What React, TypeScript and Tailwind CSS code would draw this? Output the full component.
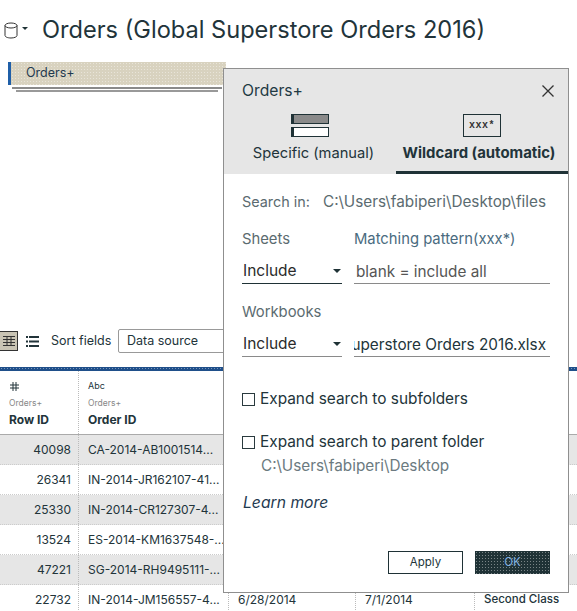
const font = "font-['Inter','Liberation_Sans',sans-serif]";

const rows = [
  { id: "40098", order: "CA-2014-AB1001514...", grey: true },
  { id: "26341", order: "IN-2014-JR162107-41...", grey: false },
  { id: "25330", order: "IN-2014-CR127307-4...", grey: true },
  { id: "13524", order: "ES-2014-KM1637548-...", grey: false },
  { id: "47221", order: "SG-2014-RH9495111-...", grey: true },
  { id: "22732", order: "IN-2014-JM156557-4...", grey: false, order_date: "6/28/2014", ship_date: "7/1/2014", mode: "Second Class" },
];

const dotted = {
  backgroundImage: "radial-gradient(#ffffff66 0.6px, transparent 0.7px)",
  backgroundSize: "3px 3px",
};

function Caret({ small }: { small?: boolean }) {
  return (
    <svg width={small ? 6 : 8} height={small ? 3 : 4} viewBox="0 0 8 4" className="text-[#1f3236]">
      <path d="M0 0h8L4 4z" fill="currentColor" />
    </svg>
  );
}

function Check({ label }: { label: string }) {
  return (
    <div className="flex items-center gap-[5px]">
      <div className="w-[13px] h-[13px] border border-[#2a3a3e] bg-white" />
      <span className="text-[15.4px] leading-5 text-[#22343a]">{label}</span>
    </div>
  );
}

function SelectLine({ dark }: { dark?: boolean }) {
  return (
    <div className={`w-[100px] h-[26px] pt-[1px] flex items-center justify-between pr-[1px] border-b ${dark ? "border-[#1f3236]" : "border-[#8a8a8a]"}`}>
      <span className="pl-[1px] text-[15.5px] text-[#2b2b2b]">Include</span>
      <Caret />
    </div>
  );
}

function Dialog() {
  return (
    <div className="absolute left-[223px] top-[68px] w-[346px] h-[525px] bg-white border border-[#8f8f8f] flex flex-col">
      <div className="bg-[#e6e6e6] h-[105px] flex flex-col shrink-0">
        <div className="flex items-center justify-between pl-[18px] pr-[14px] pt-[12px]">
          <span className="text-[15.7px] leading-5 text-[#1f3a44]">Orders+</span>
          <svg width="12" height="12" viewBox="0 0 12 12" stroke="#333" strokeWidth="1.300">
            <path d="M.5.500l11 11M11.500.500l-11 11" />
          </svg>
        </div>
        <div className="flex mt-[13px] flex-1">
          <div className="w-[172px] flex flex-col items-center">
            <div className="flex flex-col gap-[3px]">
              <div className="w-[38px] h-[10px] bg-[#8a8a8a] border-l-[3px] border-[#1f3236] border-y border-r" />
              <div className="w-[38px] h-[10px] bg-white border-l-[3px] border-[#1f3236] border-y border-r" />
            </div>
            <span className="mt-[6px] ml-[7px] text-[14.7px] leading-5 text-[#22343a] whitespace-nowrap">Specific (manual)</span>
          </div>
          <div className="flex-1 flex flex-col items-center border-b-[3px] border-[#1f3236]">
            <div className="w-[38px] h-[23px] border border-[#1f3236] bg-[#e6e6e6] flex items-center justify-center">
              <span className="font-['Liberation_Mono',monospace] text-[10px] font-bold tracking-[0.5px] text-[#333]">xxx*</span>
            </div>
            <span className="mt-[6px] mr-[6px] text-[14.9px] leading-5 font-bold text-[#22343a] whitespace-nowrap">Wildcard (automatic)</span>
          </div>
        </div>
      </div>
      <div className="flex-1 pl-[18px] pr-[18px] flex flex-col">
        <div className="mt-[18px] flex text-[14.4px] leading-5 text-[#5b6b70] whitespace-nowrap">
          <span className="w-[81px]">Search in:</span>
          <span className="text-[15.3px]">C:\Users\fabiperi\Desktop\files</span>
        </div>
        <div className="mt-[17px] flex gap-[12px] text-[14.8px] leading-5 text-[#5b6b70]">
          <div className="w-[100px]">
            <div>Sheets</div>
            <div className="mt-[9px]"><SelectLine dark /></div>
          </div>
          <div className="w-[196px]">
            <div className="text-[#4a6b80] whitespace-nowrap">Matching pattern(xxx*)</div>
            <div className="mt-[9px] h-[26px] pt-[2px] flex items-center pl-[2px] border-b border-[#8a8a8a] text-[15.3px] text-[#555]">blank = include all</div>
          </div>
        </div>
        <div className="mt-[18px] flex gap-[12px] text-[14.8px] leading-5 text-[#5b6b70]">
          <div className="w-[100px]">
            <div>Workbooks</div>
            <div className="mt-[9px]"><SelectLine /></div>
          </div>
          <div className="w-[196px] pt-[29px]">
            <div className="h-[26px] pt-[2px] flex items-center justify-end overflow-hidden border-b border-[#8a8a8a] pr-[4px] text-[15.3px] text-[#22343a] whitespace-nowrap">
              Superstore Orders 2016.xlsx
            </div>
          </div>
        </div>
        <div className="mt-[32px]"><Check label="Expand search to subfolders" /></div>
        <div className="mt-[23px]"><Check label="Expand search to parent folder" /></div>
        <div className="mt-[4px] ml-[19px] text-[15.3px] leading-5 text-[#6b7a80]">C:\Users\fabiperi\Desktop</div>
        <div className="mt-[17px] ml-[1px] text-[15.7px] leading-5 italic text-[#1f3a50]">Learn more</div>
        <div className="mt-[38px] flex justify-end gap-[12px]">
          <div className="w-[75px] h-[23px] border border-[#1f3236] flex items-center justify-center text-[11.5px] text-[#22343a]">Apply</div>
          <div className="w-[75px] h-[23px] bg-[#1f3236] flex items-center justify-center text-[11.5px] text-[#7fb0e0]" style={dotted}>OK</div>
        </div>
      </div>
    </div>
  );
}

export default function App() {
  return (
    <div className={`relative w-[577px] h-[611px] overflow-hidden bg-white ${font}`}>
      {/* title */}
      <div className="h-[62px] flex items-center pl-[4px] pb-[2px]">
        <svg width="14" height="17" viewBox="0 0 14 17" fill="none" stroke="#333" strokeWidth="1">
          <ellipse cx="7" cy="3.500" rx="6" ry="2.500" />
          <path d="M1 3.500v10c0 1.400 2.700 2.500 6 2.500s6-1.100 6-2.500v-10" />
        </svg>
        <span className="ml-[4px] mb-[3px]"><Caret small /></span>
        <span className="ml-[14px] text-[23.6px] leading-8 text-[#22343a] whitespace-nowrap">Orders (Global Superstore Orders 2016)</span>
      </div>
      {/* connection tile */}
      <div className="ml-[8px] w-[218px] h-[23px] bg-[#d8d2bf] border-l-[3px] border-[#1f5fa8] pl-[15px] flex items-center text-[12.5px] text-[#1f3a50]" style={dotted}>
        Orders+
      </div>
      <div className="ml-[12px] mt-[2px] w-[210px] h-[2px] bg-[#8a8a8a]" />
      <div className="ml-[16px] mt-[1px] w-[202px] h-[2px] bg-[#999]" />
      {/* toolbar */}
      <div className="mt-[230px] h-[38px] flex items-center">
        <div className="w-[19px] h-[20px] -ml-[1px] bg-[#c9c4b4] border border-[#333] flex items-center justify-center">
          <svg width="12" height="10" viewBox="0 0 12 10" fill="none" stroke="#333"><path d="M0 .5h12M0 3.500h12M0 6.500h12M0 9.500h12M4 0v10M8 0v10" /></svg>
        </div>
        <svg width="13" height="11" viewBox="0 0 13 11" fill="#22343a" className="ml-[8px]">
          <path d="M0 0h2v2H0zM3 0h10v2H3zM0 4.500h2v2H0zM3 4.500h10v2H3zM0 9h2v2H0zM3 9h10v2H3z" />
        </svg>
        <span className="ml-[12px] w-[67px] text-[12.5px] text-[#22343a] whitespace-nowrap">Sort fields</span>
        <div className="w-[110px] h-[24px] border border-[#999] rounded-[2px] pl-[8px] pt-[1px] flex items-center text-[12.5px] text-[#22343a]">Data source</div>
      </div>
      {/* table */}
      <div className="mt-[7px] h-[4px] bg-[#1f4f8a]" style={dotted} />
      <div>
        <div className="h-[64px] flex border-b border-[#aaa]">
          <div className="w-[79px] pl-[10px] pt-[7px] border-r border-dotted border-[#bbb]">
            <div className="h-[16px] flex items-center">
              <svg width="9" height="9" viewBox="0 0 9 9" fill="none" stroke="#22343a" strokeWidth="1">
                <path d="M3 0v9M6 0v9M0 3h9M0 6h9" />
              </svg>
            </div>
            <div className="-ml-[1px] mt-[3px] text-[8.5px] leading-[12px] text-[#888]">Orders+</div>
            <div className="-ml-[1px] mt-[3px] text-[12px] leading-[16px] font-bold text-[#22343a]">Row ID</div>
          </div>
          <div className="flex-1 pl-[9px] pt-[7px]">
            <div className="text-[9px] leading-[16px] text-[#22343a]">Abc</div>
            <div className="mt-[3px] text-[8.5px] leading-[12px] text-[#888]">Orders+</div>
            <div className="mt-[3px] text-[12px] leading-[16px] font-bold text-[#22343a]">Order ID</div>
          </div>
        </div>
        {rows.map((row) => (
          <div key={row.id} className={`h-[30px] flex items-center text-[12px] text-[#22343a] whitespace-nowrap border-b border-dotted border-[#ccc] ${row.grey ? "bg-[#e6e6e6]" : "bg-white"}`}>
            <div className="w-[79px] h-full shrink-0 flex items-center justify-end pr-[7px] border-r border-dotted border-[#bbb]">{row.id}</div>
            <div className="w-[150px] h-full shrink-0 flex items-center pl-[9px] border-r border-dotted border-[#bbb]">{row.order}</div>
            <div className="w-[127px] h-full shrink-0 flex items-center pl-[9px] border-r border-dotted border-[#bbb]">{row.order_date}</div>
            <div className="w-[119px] h-full shrink-0 flex items-center pl-[9px] border-r border-dotted border-[#bbb]">{row.ship_date}</div>
            <div className="flex-1 h-full flex items-center pl-[9px] text-[11.5px] font-medium">{row.mode}</div>
          </div>
        ))}
      </div>
      <Dialog />
    </div>
  );
}
